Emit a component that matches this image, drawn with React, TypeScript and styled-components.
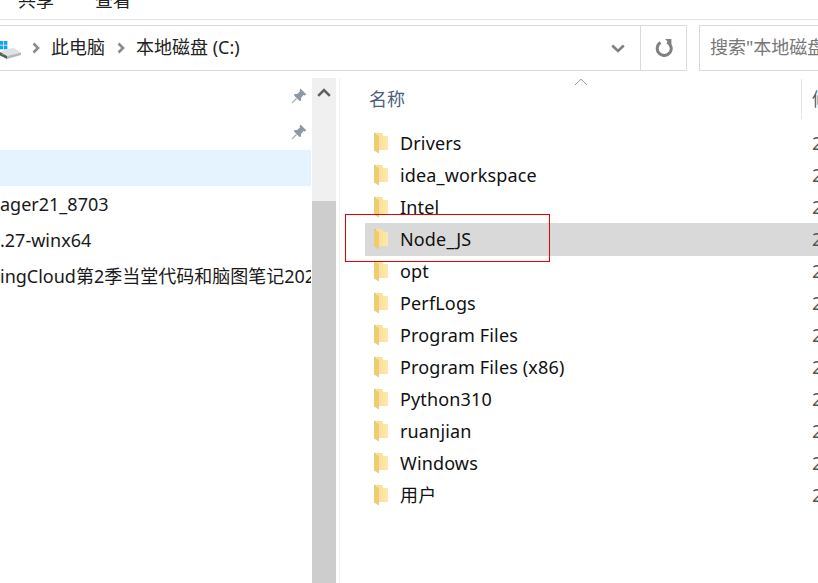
import React from "react";
import styled, { createGlobalStyle } from "styled-components";

const Global = createGlobalStyle`
  html, body { margin: 0; padding: 0; background: #fff; overflow: hidden; }
  * { box-sizing: border-box; }
`;

const Window = styled.div`
  position: relative;
  width: 818px;
  height: 583px;
  overflow: hidden;
  background: #fff;
  font-family: "Noto Sans", "Noto Sans CJK SC", sans-serif;
  font-size: 18px;
  color: #111;
`;

const Ribbon = styled.div`
  height: 20px;
  border-bottom: 1px solid #e2e2e2;
  display: flex;
  gap: 41px;
  padding-left: 18px;
  overflow: hidden;
`;

const RibbonTab = styled.div`
  margin-top: -13px;
  height: 26px;
  line-height: 26px;
  width: 36px;
  color: #222;
`;

const AddressRow = styled.div`
  height: 51px;
  padding-top: 5px;
  display: flex;
  gap: 12px;
`;

const AddressBox = styled.div`
  width: 687px;
  height: 46px;
  flex: none;
  border: 1px solid #dadada;
  border-left: 0;
  display: flex;
  align-items: center;
`;

const Crumbs = styled.div`
  flex: 1;
  display: flex;
  align-items: center;
  height: 100%;
  min-width: 0;
`;

const DriveIcon = styled.svg`
  width: 23px;
  height: 24px;
  margin: 0 -1px 0 -2px;
  flex: none;
`;

const CrumbArrow = styled.svg`
  width: 8px;
  height: 12px;
  margin: 0 11px 0 12px;
  flex: none;
`;

const Crumb = styled.span`
  white-space: nowrap;
  color: #222;
  line-height: 44px;
  margin-top: -2px;
`;

const DropZone = styled.div`
  width: 55px;
  height: 100%;
  display: flex;
  align-items: center;
  padding-left: 26px;
  flex: none;
`;

const RefreshZone = styled.div`
  width: 46px;
  height: 100%;
  border-left: 1px solid #dadada;
  display: flex;
  align-items: center;
  justify-content: center;
  flex: none;
`;

const SearchBox = styled.div`
  flex: 1;
  height: 46px;
  border: 1px solid #dadada;
  border-right: 0;
  padding-left: 10px;
  line-height: 42px;
  color: #777;
  white-space: nowrap;
  overflow: hidden;
`;

const Body = styled.div`
  height: 512px;
  display: flex;
`;

const Nav = styled.div`
  width: 311px;
  flex: none;
  padding-top: 7px;
  overflow: hidden;
`;

const NavRow = styled.div<{ $active?: boolean }>`
  height: 36px;
  display: flex;
  align-items: center;
  justify-content: flex-end;
  padding-right: 4px;
  background: ${(p) => (p.$active ? "#e5f3ff" : "transparent")};
`;

const NavText = styled.div`
  width: 311px;
  flex: none;
  margin-right: -4px;
  height: 36px;
  line-height: 36px;
  white-space: nowrap;
  color: #1a1a1a;
`;

const PinIcon = styled.svg`
  width: 16px;
  height: 16px;
  margin-top: -1px;
`;

const Scrollbar = styled.div`
  width: 24px;
  flex: none;
  margin: 7px 0 0 1px;
  background: #f0f0f0;
  display: flex;
  flex-direction: column;
`;

const ScrollUp = styled.div`
  height: 123px;
  display: flex;
  justify-content: center;
  padding-top: 10px;
`;

const ScrollThumb = styled.div`
  flex: 1;
  background: #cdcdcd;
`;

const Main = styled.div`
  position: relative;
  flex: 1;
  margin: 7px 0 0 3px;
  padding-left: 25px;
  border-left: 1px solid #f2f2f2;
`;

const HeaderRow = styled.div`
  height: 49px;
  display: flex;
  align-items: center;
  color: #4c607a;
  padding-left: 4px;
`;

const HeaderName = styled.div`
  width: 432px;
  flex: none;
  margin-top: -10px;
`;

const HeaderSep = styled.div`
  width: 1px;
  height: 40px;
  margin-top: -8px;
  background: #e5e5e5;
  flex: none;
`;

const HeaderNext = styled.div`
  margin-left: 10px;
  margin-top: -10px;
  white-space: nowrap;
`;

const SortCaret = styled.svg`
  position: absolute;
  left: 234px;
  top: 0;
  width: 14px;
  height: 8px;
`;

const FileRow = styled.div<{ $selected?: boolean }>`
  height: ${(p) => (p.$selected ? "33px" : "32px")};
  margin-bottom: ${(p) => (p.$selected ? "-1px" : "0")};
  display: flex;
  align-items: flex-start;
  padding-left: 8px;
  background: ${(p) => (p.$selected ? "#d9d9d9" : "transparent")};
  overflow: hidden;
`;

const FolderIcon = styled.svg`
  width: 16px;
  height: 22px;
  flex: none;
  margin: 5px 11px 0 0;
`;

const FileName = styled.div`
  width: 412px;
  flex: none;
  white-space: nowrap;
  color: #111;
  line-height: 32px;
  letter-spacing: 0.15px;
`;

const FileDate = styled.div`
  color: #555;
  white-space: nowrap;
  line-height: 32px;
`;

const RedMark = styled.div`
  position: absolute;
  left: 345px;
  top: 214px;
  width: 205px;
  height: 48px;
  border: 1px solid #e60000;
`;

const files = [
  "Drivers",
  "idea_workspace",
  "Intel",
  "Node_JS",
  "opt",
  "PerfLogs",
  "Program Files",
  "Program Files (x86)",
  "Python310",
  "ruanjian",
  "Windows",
  "用户",
];

const Pin = () => (
  <PinIcon viewBox="0 0 16 16">
    <path d="M9.5 0.5 L15.5 6.5 L13.5 7.5 L12.5 7 L10 10 L10 12.5 L8.5 13 L3 7.5 L3.5 6 L6 6 L9 3.5 L8.5 2.5 Z" fill="#8b98a5" />
    <path d="M5 10 L6 11 L1.2 15.6 L0.4 14.8 Z" fill="#a7b0b9" />
  </PinIcon>
);

const Arrow = () => (
  <CrumbArrow viewBox="0 0 8 12">
    <path d="M1.5 1.5 L6 6 L1.5 10.5" fill="none" stroke="#8a8a8a" strokeWidth="2.6" />
  </CrumbArrow>
);

const Folder = () => (
  <FolderIcon viewBox="0 0 16 22">
    <defs>
      <linearGradient id="folderBack" x1="0" y1="0" x2="1" y2="0">
        <stop offset="0" stopColor="#f8de92" />
        <stop offset="1" stopColor="#fbe9ae" />
      </linearGradient>
    </defs>
    <path d="M3 1 H9 L10.5 4 H15 V18 H3 Z" fill="url(#folderBack)" />
    <path d="M1 1.5 L6 4 V21.5 L1 18.5 Z" fill="#eecd72" />
    <path d="M1 1 H3 V2.5 H1 Z" fill="#e9c767" />
  </FolderIcon>
);

export default function App() {
  return (
    <Window>
      <Global />
      <Ribbon>
        <RibbonTab>共享</RibbonTab>
        <RibbonTab>查看</RibbonTab>
      </Ribbon>
      <AddressRow>
        <AddressBox>
          <Crumbs>
            <DriveIcon viewBox="0 0 23 24">
              <rect x="2" y="5" width="3.4" height="3.8" fill="#12a5ee" />
              <rect x="6" y="5" width="3.4" height="3.8" fill="#12a5ee" />
              <rect x="2" y="9.5" width="3.4" height="3.8" fill="#12a5ee" />
              <rect x="6" y="9.5" width="3.4" height="3.8" fill="#12a5ee" />
              <path d="M9 13 L16 12 L23 16.5 L9 20 L2 16 Z" fill="#dfe3e3" />
              <path d="M2 16 L9 20 L9 23 L2 19.5 Z" fill="#565c5c" />
              <path d="M9 20 L23 16.5 V19 L9 23 Z" fill="#b4babb" />
              <rect x="4" y="17.8" width="2" height="1.2" fill="#38c172" />
            </DriveIcon>
            <Arrow />
            <Crumb>此电脑</Crumb>
            <Arrow />
            <Crumb>本地磁盘 (C:)</Crumb>
          </Crumbs>
          <DropZone>
            <svg width="14" height="9" viewBox="0 0 14 9">
              <path d="M1.2 1.5 L7 7 L12.8 1.5" fill="none" stroke="#808080" strokeWidth="2.6" />
            </svg>
          </DropZone>
          <RefreshZone>
            <svg width="18" height="18" viewBox="0 0 18 18">
              <path d="M5.5 3.6 A7 7 0 1 0 12.2 3.2" fill="none" stroke="#808080" strokeWidth="3" />
              <path d="M10 0 H16.4 V6.6 Z" fill="#808080" />
            </svg>
          </RefreshZone>
        </AddressBox>
        <SearchBox>搜索"本地磁盘 (C:)"</SearchBox>
      </AddressRow>
      <Body>
        <Nav>
          <NavRow><Pin /></NavRow>
          <NavRow><Pin /></NavRow>
          <NavRow $active />
          <NavRow><NavText>ager21_8703</NavText></NavRow>
          <NavRow><NavText>.27-winx64</NavText></NavRow>
          <NavRow><NavText>ingCloud第2季当堂代码和脑图笔记2022</NavText></NavRow>
        </Nav>
        <Scrollbar>
          <ScrollUp>
            <svg width="14" height="9" viewBox="0 0 14 9">
              <path d="M1.2 7.8 L7 2 L12.8 7.8" fill="none" stroke="#606060" strokeWidth="2.6" />
            </svg>
          </ScrollUp>
          <ScrollThumb />
        </Scrollbar>
        <Main>
          <SortCaret viewBox="0 0 14 8">
            <path d="M1 7 L7 1.2 L13 7" fill="none" stroke="#9a9a9a" strokeWidth="1" />
          </SortCaret>
          <HeaderRow>
            <HeaderName>名称</HeaderName>
            <HeaderSep />
            <HeaderNext>修改日期</HeaderNext>
          </HeaderRow>
          {files.map((f) => (
            <FileRow key={f} $selected={f === "Node_JS"}>
              <Folder />
              <FileName>{f}</FileName>
              <FileDate>2022</FileDate>
            </FileRow>
          ))}
        </Main>
      </Body>
      <RedMark />
    </Window>
  );
}
